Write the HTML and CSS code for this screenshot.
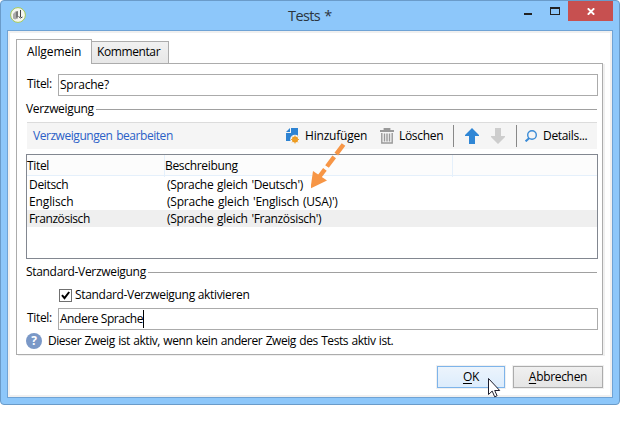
FILE: index.html
```
<!DOCTYPE html>
<html lang="de">
<head>
<meta charset="utf-8">
<title>Tests</title>
<link rel="stylesheet" href="styles.css">
</head>
<body>
<div class="window">
  <header class="titlebar">
    <svg class="app-icon" width="16" height="16" viewBox="0 0 16 16"><circle cx="8" cy="8" r="7.4" fill="#f4f6ef" stroke="#a5c957"/><path d="M3 7l3-3 2 .5v7l-3 1-2-1z" fill="#aaa"/><path d="M6 5l2-1v6l-2 1z" fill="#777"/><path d="M10.5 3v7M8.5 9.5l2 1.5 2-1" fill="none" stroke="#444"/></svg>
    <h1 class="caption">Tests *</h1>
    <div class="controls">
      <svg width="37" height="20" viewBox="0 0 37 20"><path d="M0 12h8v2H0z" fill="#222"/><path d="M26 6h10v8H26z" fill="#222"/><path d="M27 8h8v5h-8z" fill="#8dc7fa"/></svg>
      <span class="close"><svg width="8" height="7" viewBox="0 0 8 7"><path d="M.8.3L7.2 6.7M7.2.3L.8 6.7" stroke="#fff" stroke-width="1.9"/></svg></span>
    </div>
  </header>
  <main class="client">
    <nav class="tabs"><span class="tab active"><span class="t-allg">Allgemein</span></span><span class="tab"><span class="t-komm">Kommentar</span></span></nav>
    <section class="panel">
      <div class="field"><label>Titel:</label><div class="input"><span class="t-sprache">Sprache?</span></div></div>
      <div class="group first"><span class="t-verz">Verzweigung</span><i></i></div>
      <div class="toolbar">
        <span class="link">Verzweigungen bearbeiten</span>
        <span class="tool add"><svg width="14" height="16" viewBox="0 0 14 16"><path d="M5 0h7v13H0V5h5z" fill="#2e83d2"/><path d="M0 4l4-4v4z" fill="#2e83d2"/><circle cx="9" cy="11.5" r="4.8" fill="#f5f5f5"/><circle cx="9" cy="11.5" r="3" fill="#ed950d"/><path d="M9 7.5v8M5 11.5h8M6.2 8.7l5.6 5.6M11.8 8.7l-5.6 5.6" stroke="#edA030"/></svg><span class="t-hinz">Hinzufügen</span></span>
        <span class="tool del"><svg width="14" height="16" viewBox="0 0 14 16"><path d="M0 3h14M4.5 3V1h5v2" fill="none" stroke="#999" stroke-width="1.8"/><path d="M1.8 5v10h10.4V5M4.5 5.5v8M7 5.5v8M9.5 5.5v8" fill="none" stroke="#999" stroke-width="1.4"/></svg><span class="t-loe">Löschen</span></span>
        <b class="sep"></b>
        <svg class="up" width="14" height="16" viewBox="0 0 14 16"><path d="M7 0l7 7v1h-4v8H4V8H0V7z" fill="#2f86d5"/></svg>
        <svg class="down" width="14" height="16" viewBox="0 0 14 16"><path d="M7 16l7-7V8h-4V0H4v8H0v1z" fill="#cdcdcd"/></svg>
        <b class="sep"></b>
        <span class="tool det"><svg width="12" height="12" viewBox="0 0 12 12"><circle cx="7" cy="5" r="4.3" fill="none" stroke="#3b8bd6" stroke-width="1.4"/><path d="M4.3 8L.6 11.4" stroke="#3b8bd6" stroke-width="2"/></svg><span class="t-det">Details...</span></span>
      </div>
      <div class="table">
        <div class="row head"><span><em>Titel</em></span><span><em class="t-th2">Beschreibung</em></span><span></span></div>
        <div class="row"><span><em class="t-r1">Deitsch</em></span><span><em class="t-d1">(Sprache gleich 'Deutsch')</em></span></div>
        <div class="row"><span><em class="t-r2">Englisch</em></span><span><em class="t-d2">(Sprache gleich 'Englisch (USA)')</em></span></div>
        <div class="row selected"><span><em class="t-r3">Französisch</em></span><span><em class="t-d3">(Sprache gleich 'Französisch')</em></span></div>
      </div>
      <div class="group second"><span class="t-std">Standard-Verzweigung</span><i></i></div>
      <div class="check"><span class="box"><svg width="11" height="11" viewBox="0 0 11 11"><path d="M2 5.2l2.5 3L9.2 2" fill="none" stroke="#000" stroke-width="2"/></svg></span><span class="t-akt">Standard-Verzweigung aktivieren</span></div>
      <div class="field"><label>Titel:</label><div class="input"><span class="t-and">Andere Sprache</span><i class="caret"></i></div></div>
      <div class="hint"><span class="help">?</span><span class="t-hint">Dieser Zweig ist aktiv, wenn kein anderer Zweig des Tests aktiv ist.</span></div>
    </section>
    <footer class="buttons"><span class="button ok"><span><u>O</u>K</span></span><span class="button cancel"><span class="t-abb"><u>A</u>bbrechen</span></span></footer>
  </main>
</div>
<svg class="pointer-arrow" width="36" height="46" viewBox="0 0 36 46"><path d="M32.5 1.5L8.5 33.5" stroke="#f79646" stroke-width="4.5" stroke-dasharray="12 3.5" fill="none"/><path d="M-.5 45.5L2 28L16 37.5z" fill="#f79646"/></svg>
<svg class="cursor" width="13" height="20" viewBox="0 0 13 20"><path d="M.5.5v16l3.7-3.4 2.5 5.7 2.4-1.1-2.4-5.2h5z" fill="#fff" stroke="#1c1c2b"/></svg>
</body>
</html>
```
FILE: styles.css
```
* { box-sizing: border-box; }
body { margin: 0; width: 639px; height: 424px; overflow: hidden; background: #fff; color: #000; font: 12px/16px "Open Sans", "Noto Sans", sans-serif; letter-spacing: -.32px; white-space: nowrap; }
svg { display: block; flex: none; }
em, i { font-style: normal; }
.window { width: 620px; height: 405px; background: #8dc7fa; border: 1px solid #6a9bc9; border-radius: 4px; padding: 0 6px 6px; }
.titlebar { height: 29px; display: flex; align-items: flex-start; }
.app-icon { margin: 6px 0 0 3px; }
.caption { margin: 5px 0 0 262px; font-size: 14.5px; line-height: 20px; font-weight: 400; letter-spacing: -.6px; word-spacing: 1px; color: #2b353f; }
.controls { display: flex; margin-left: auto; }
.close { width: 45px; height: 20px; margin-left: 7px; background: #c75050; display: flex; align-items: center; justify-content: center; }
.client { height: 368px; border: 1px solid #6fa3d5; box-shadow: inset 0 0 0 2px #f0f0f0; background: #fff; padding: 8px 10px 0 8px; }
.tabs { display: flex; align-items: flex-end; height: 24px; }
.tab { height: 22px; width: 77px; border: 1px solid #acacac; border-left: 0; border-bottom: 0; background: linear-gradient(#f1f1f1, #e7e7e7); padding: 2px 0 0 5px; }
.tab.active { height: 25px; width: 76px; margin-bottom: -1px; border-left: 1px solid #acacac; background: #fff; padding: 4px 0 0 10px; position: relative; }
.panel { width: 587px; height: 292px; border: 1px solid #acacac; box-shadow: 2px 1px 0 #f0f0f0; padding: 10px 4px 0 9px; }
.field { display: flex; height: 23px; padding-left: 1px; }
.field label { width: 31px; line-height: 20px; }
.input { width: 541px; height: 22px; border: 1px solid #ababab; padding-left: 1px; line-height: 20px; display: flex; }
.caret { width: 1px; height: 18px; margin-top: 1px; background: #000; }
.group { display: flex; align-items: center; gap: 2px; height: 16px; margin-right: 1px; }
.group i { flex: 1; height: 1px; background: #a0a0a0; }
.first { margin-top: 4px; }
.toolbar { display: flex; align-items: center; height: 27px; margin: 5px 1px 0; border-top: 1px solid #dcdcdc; background: #f5f5f5; padding-left: 6px; }
.link { width: 253px; color: #2b5fc7; letter-spacing: -.45px; word-spacing: 1px; }
.tool { display: flex; align-items: center; }
.add { gap: 5px; width: 94px; }
.del { gap: 5px; width: 73px; }
.sep { width: 1px; height: 22px; background: #888; }
.up { margin-left: 11px; }
.down { margin: 0 11px 0 12px; }
.det { gap: 6px; margin-left: 8px; }
.table { width: 572px; height: 105px; margin-top: 5px; border: 1px solid #828790; }
.row { display: grid; grid-template-columns: 138px 288px 1fr; height: 17px; line-height: 18px; }
.row span { padding-left: 2px; }
.row em { display: block; }
.head { height: 21px; line-height: 22px; background: #fcfcfc; border-bottom: 1px solid #e5f0fb; }
.head span { border-right: 1px solid #e5f0fb; padding-left: 0; }
.head span + span { padding-left: 0; }
.head span:last-child { border: 0; }
.selected { background: #efefef; }
.second { margin-top: 5px; }
.check { display: flex; align-items: center; height: 28px; padding: 2px 0 0 33px; gap: 3px; }
.box { width: 13px; height: 13px; border: 1px solid #707070; }
.hint { display: flex; align-items: center; gap: 6px; height: 20px; }
.help { width: 16px; height: 16px; border-radius: 50%; background: #7a98c7; color: #fff; text-align: center; font-weight: 700; line-height: 16px; }
.t-hint { letter-spacing: -.45px; word-spacing: .75px; }
.t-allg { letter-spacing: -.1px; }
.t-komm { letter-spacing: -.4px; }
.t-sprache, .t-hinz { letter-spacing: -.2px; }
.t-d1, .t-d3 { letter-spacing: -.32px; word-spacing: 1px; }
.t-d2 { letter-spacing: -.22px; word-spacing: 1px; }
.t-r2 { letter-spacing: -.13px; }
.t-r3, .t-and { letter-spacing: -.43px; }
.buttons { display: flex; justify-content: flex-end; gap: 8px; margin-top: 11px; margin-right: -1px; }
.button { width: 90px; height: 22px; border: 1px solid #acacac; box-shadow: 0 0 0 1px #f0f0f0; background: linear-gradient(#f0f0f0, #e5e5e5); display: flex; justify-content: center; line-height: 20px; }
.ok { width: 68px; border-color: #7eb4ea; background: linear-gradient(#ecf4fc, #dcecfc); }
u { text-underline-offset: 2px; }
.pointer-arrow { position: absolute; left: 311px; top: 143px; }
.cursor { position: absolute; left: 488px; top: 378px; }
```
